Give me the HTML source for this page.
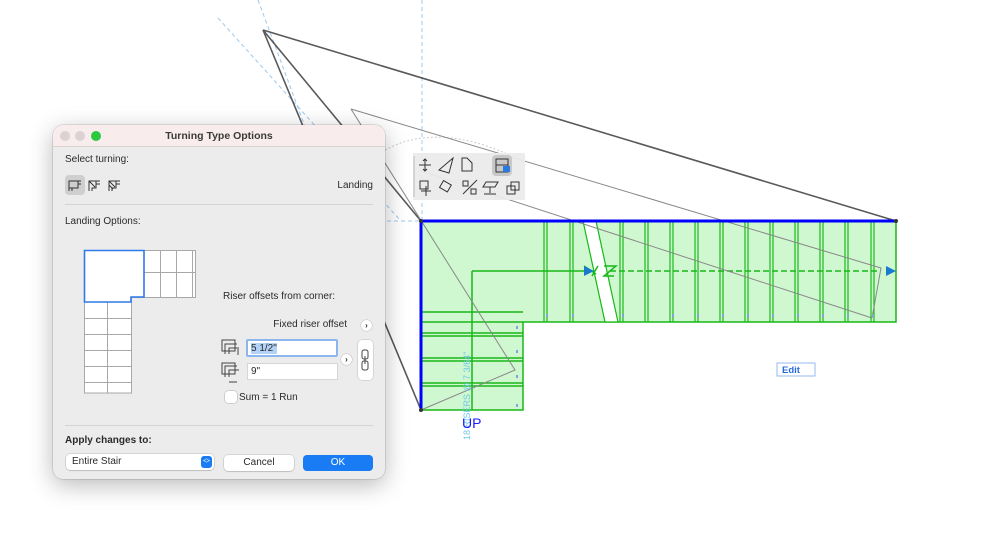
<!DOCTYPE html>
<html><head><meta charset="utf-8"><style>
*{box-sizing:border-box;margin:0;padding:0}
body{width:998px;height:536px;background:#fff;position:relative;overflow:hidden;font-family:"Liberation Sans",sans-serif;font-size:10px;color:#2a2a2a}
.abs{position:absolute}
#dlg{left:53px;top:125px;width:332px;height:354px;background:#ececec;border-radius:10px;box-shadow:0 6px 24px rgba(0,0,0,.28),0 0 0 .5px rgba(0,0,0,.2);overflow:hidden}
#tb{left:0;top:0;width:332px;height:22px;background:#f8ecec;border-bottom:1px solid #dcd2d2;text-align:center;font-weight:bold;font-size:10.5px;line-height:22px;color:#3a3a3a}
.dot{position:absolute;top:6px;width:10px;height:10px;border-radius:50%;background:#dcd2d4}
.inp{position:absolute;background:#fff;border:1px solid #d6d6d6;font-size:10px;padding-left:3px;line-height:15px}
.btn{position:absolute;background:#fff;border-radius:4px;box-shadow:0 0 0 .5px rgba(0,0,0,.2),0 1px 1px rgba(0,0,0,.1);text-align:center;font-size:10px;line-height:16px}
.rnd{position:absolute;width:11px;height:11px;border-radius:50%;background:#fff;box-shadow:0 0 0 .5px rgba(0,0,0,.2);font-size:8px;line-height:11px;text-align:center;font-weight:bold}
</style></head><body>
<svg class="abs" style="left:0;top:0" width="998" height="536">
<g stroke="#9cc8f0" stroke-width="1" stroke-dasharray="4,3" fill="none">
<line x1="422" y1="0" x2="422" y2="221"/>
<line x1="258" y1="0" x2="310" y2="140"/>
<line x1="218" y1="18" x2="400" y2="220"/>
<line x1="380" y1="221" x2="421" y2="221"/>
</g>
<path d="M385,150 Q440,120 520,160" stroke="#ccc" stroke-dasharray="2,2" fill="none"/>
<polygon points="421,221 896,221 896,322 523,322 523,410 421,410" fill="#d0f8d0"/>
<g stroke="#18b818" stroke-width="1.5" fill="none">
<polyline points="421,221 896,221 896,322 523,322 523,410 421,410"/>
<line x1="523" y1="322" x2="421" y2="322"/>
<line x1="421" y1="312" x2="523" y2="312"/>
<line x1="421" y1="333" x2="523" y2="333"/><line x1="421" y1="336" x2="523" y2="336"/>
<line x1="421" y1="358" x2="523" y2="358"/><line x1="421" y1="361" x2="523" y2="361"/>
<line x1="421" y1="383" x2="523" y2="383"/><line x1="421" y1="386" x2="523" y2="386"/>
<line x1="472" y1="271" x2="472" y2="410"/>
<line x1="472" y1="271" x2="590" y2="271"/>
<line x1="610" y1="271" x2="880" y2="271" stroke-dasharray="6,3"/>
</g>
<g stroke="#18b818" stroke-width="1.2">
<line x1="544" y1="221" x2="544" y2="322"/><line x1="547" y1="221" x2="547" y2="322"/>
<line x1="570" y1="221" x2="570" y2="322"/><line x1="573" y1="221" x2="573" y2="322"/>
<line x1="620" y1="221" x2="620" y2="322"/><line x1="623" y1="221" x2="623" y2="322"/>
<line x1="645" y1="221" x2="645" y2="322"/><line x1="648" y1="221" x2="648" y2="322"/>
<line x1="670" y1="221" x2="670" y2="322"/><line x1="673" y1="221" x2="673" y2="322"/>
<line x1="695" y1="221" x2="695" y2="322"/><line x1="698" y1="221" x2="698" y2="322"/>
<line x1="720" y1="221" x2="720" y2="322"/><line x1="723" y1="221" x2="723" y2="322"/>
<line x1="745" y1="221" x2="745" y2="322"/><line x1="748" y1="221" x2="748" y2="322"/>
<line x1="770" y1="221" x2="770" y2="322"/><line x1="773" y1="221" x2="773" y2="322"/>
<line x1="795" y1="221" x2="795" y2="322"/><line x1="798" y1="221" x2="798" y2="322"/>
<line x1="820" y1="221" x2="820" y2="322"/><line x1="823" y1="221" x2="823" y2="322"/>
<line x1="845" y1="221" x2="845" y2="322"/><line x1="848" y1="221" x2="848" y2="322"/>
<line x1="871" y1="221" x2="871" y2="322"/><line x1="874" y1="221" x2="874" y2="322"/>
</g>
<polygon points="583,221 596,221 618,322 605,322" fill="#fff" stroke="#18b818" stroke-width="1.2"/>
<path d="M584,266 L596,274 M598,266 L592,276 M604,266 L616,266 L604,276 L614,276" stroke="#18b818" stroke-width="1.5" fill="none"/>
<polygon points="584,266 594,271 584,276" fill="#1a7ad0"/>
<polygon points="886,266 896,271 886,276" fill="#1a7ad0"/>
<g stroke="#222" stroke-width="1.6" fill="none" opacity=".75">
<line x1="263" y1="30" x2="896" y2="221"/>
<line x1="263" y1="30" x2="421" y2="221"/>
<line x1="263" y1="30" x2="421" y2="410"/>
</g>
<g stroke="#888" stroke-width="1" fill="none">
<polyline points="351,109 881,268 872,318"/>
<polyline points="351,109 515,370 421,410"/>
<line x1="418" y1="170" x2="872" y2="318"/>
</g>
<line x1="421" y1="221" x2="896" y2="221" stroke="#0000ff" stroke-width="3"/>
<line x1="421" y1="221" x2="421" y2="410" stroke="#0000ff" stroke-width="3"/>
<circle cx="421" cy="221" r="2" fill="#333"/><circle cx="896" cy="221" r="2" fill="#333"/><circle cx="421" cy="410" r="2" fill="#333"/>
<g fill="#88a0e0"><rect x="516" y="326" width="2" height="3"/><rect x="516" y="350" width="2" height="3"/><rect x="516" y="375" width="2" height="3"/><rect x="516" y="404" width="2" height="3"/>
<rect x="546" y="314" width="2" height="3"/><rect x="572" y="314" width="2" height="3"/><rect x="622" y="314" width="2" height="3"/><rect x="672" y="314" width="2" height="3"/><rect x="697" y="314" width="2" height="3"/><rect x="722" y="314" width="2" height="3"/><rect x="747" y="314" width="2" height="3"/><rect x="772" y="314" width="2" height="3"/><rect x="797" y="314" width="2" height="3"/><rect x="822" y="314" width="2" height="3"/><rect x="847" y="314" width="2" height="3"/><rect x="872" y="314" width="2" height="3"/></g>
<text x="0" y="0" transform="translate(470,440) rotate(-90)" font-size="9" fill="#6cc8e8" font-family="Liberation Sans">18 RISERS @ 7 3/64"</text>
<text x="462" y="428" font-size="14" fill="#1a1aff" font-family="Liberation Sans">UP</text>
<rect x="777" y="363" width="38" height="13" fill="#fff" stroke="#9ab8f0"/>
<text x="782" y="373" font-size="9.5" fill="#2a6be0" font-weight="bold" font-family="Liberation Sans">Edit</text>
<rect x="413" y="153" width="112" height="47" fill="#ebebeb" opacity=".95"/>
<line x1="414" y1="156" x2="414" y2="197" stroke="#bbb"/>
<rect x="492" y="155" width="20" height="21" rx="4" fill="#c8c8c8"/>
<g stroke="#333" stroke-width="1" fill="none">
<path d="M425,159v12M419,165h12M423,161l2,-2l2,2M423,169l2,2l2,-2"/>
<path d="M439,170l14,-12l-4,15z"/>
<path d="M462,158h5l5,5v8h-10z"/>
<rect x="496" y="159" width="12" height="13"/><line x1="496" y1="165" x2="508" y2="165"/>
<rect x="420" y="181" width="8" height="8"/><path d="M426,186v10M421,191h10"/>
<rect x="441" y="182" width="9" height="8" transform="rotate(30 445 186)"/>
<path d="M463,194l14,-14"/><rect x="463" y="181" width="5" height="5"/><rect x="471" y="189" width="5" height="5"/>
<path d="M486,182h12l-3,5h-12zM490,187v6M484,194h12"/>
<rect x="507" y="186" width="8" height="8"/><rect x="511" y="182" width="8" height="8"/>
</g>
<rect x="503" y="166" width="7" height="6" fill="#2a7ae0"/>
</svg>

<div id="dlg" class="abs">
 <div id="tb" class="abs">Turning Type Options</div>
 <div class="dot" style="left:7px"></div><div class="dot" style="left:22px"></div><div class="dot" style="left:38px;background:#2cc840"></div>
 <div class="abs" style="left:12px;top:29px">Select turning:</div>
 <div class="abs" style="left:12px;top:50px;width:20px;height:20px;background:#cfcfcf;border-radius:4px"></div>
 <svg class="abs" style="left:14px;top:52px" width="60" height="16"><g stroke="#333" fill="none" stroke-width="1">
  <path d="M2,14V4h9v7H5v3M2,11h3M11,4h3M11,7h3"/>
  <path d="M22,14V4h7v7H25v3M22,4l6,6M29,4h4M29,7h4"/>
  <path d="M42,14V4h7v7H45v3M42,4l6,6M42,8l4,4M49,4h4M49,7h4"/></g></svg>
 <div class="abs" style="right:12px;top:55px">Landing</div>
 <div class="abs" style="left:12px;top:79px;width:308px;height:1px;background:#d4d4d4"></div>
 <div class="abs" style="left:12px;top:91px">Landing Options:</div>
 <svg class="abs" style="left:0;top:0" width="332" height="300"><g stroke="#a8a8a8" fill="none" stroke-width="1">
  <rect x="31.5" y="125.5" width="111" height="47" fill="#fff"/>
  <rect x="31.5" y="172" width="47" height="96" fill="#fff"/>
  <path d="M31.5,125V268M54.5,147V268M78.5,172V268M107.5,125V172M123.5,125V172M139.5,125V172M142.5,125V172M55,147.5H142M31,193.5H78M31,209.5H78M31,225.5H78M31,241.5H78M31,257.5H78"/></g>
  <path d="M31.5,125.5H91V172H78V177H31.5Z" fill="#fff" stroke="#2f7ae8" stroke-width="1.6"/></svg>
 <div class="abs" style="left:170px;top:166px">Riser offsets from corner:</div>
 <div class="abs" style="right:38px;top:194px">Fixed riser offset</div>
 <div class="rnd" style="left:308px;top:195px">›</div>
 <svg class="abs" style="left:168px;top:214px" width="22" height="46"><g stroke="#444" fill="none" stroke-width="1"><rect x="1" y="1" width="13" height="11"/><path d="M4,15V5h12M8,15V9h8M17,8v8"/><rect x="1" y="24" width="13" height="11"/><path d="M4,38V27h12M8,38V31h10M8,43h8"/></g></svg>
 <div class="inp" style="left:193px;top:214px;width:92px;height:18px;border:2px solid #8bb6ef;border-radius:2px"><span style="background:#b3d2f8">5 1/2"</span></div>
 <div class="inp" style="left:194px;top:238px;width:91px;height:17px">9"</div>
 <div class="rnd" style="left:288px;top:229px">›</div>
 <div class="abs" style="left:305px;top:215px;width:15px;height:40px;background:#fff;border-radius:4px;box-shadow:0 0 0 .5px rgba(0,0,0,.2)"><svg width="15" height="40"><g stroke="#444" fill="none"><rect x="4" y="10" width="6" height="9" rx="2"/><rect x="4" y="21" width="6" height="9" rx="2"/><line x1="7" y1="16" x2="7" y2="24"/></g></svg></div>
 <div class="abs" style="left:172px;top:266px;width:12px;height:12px;background:#fff;border-radius:3px;box-shadow:0 0 0 .5px rgba(0,0,0,.25)"></div>
 <div class="abs" style="left:186px;top:267px">Sum = 1 Run</div>
 <div class="abs" style="left:12px;top:300px;width:308px;height:1px;background:#d4d4d4"></div>
 <div class="abs" style="left:12px;top:310px;font-weight:bold">Apply changes to:</div>
 <div class="btn" style="left:13px;top:329px;width:148px;text-align:left;padding-left:6px">Entire Stair<span style="position:absolute;right:2px;top:2px;width:11px;height:12px;background:#1a7cf5;border-radius:3px;color:#fff;font-size:7px;line-height:6px;text-align:center">︿<br>﹀</span></div>
 <div class="btn" style="left:171px;top:330px;width:70px">Cancel</div>
 <div class="btn" style="left:250px;top:330px;width:70px;background:#1a7cf5;color:#fff;box-shadow:none">OK</div>
</div>
</body></html>
